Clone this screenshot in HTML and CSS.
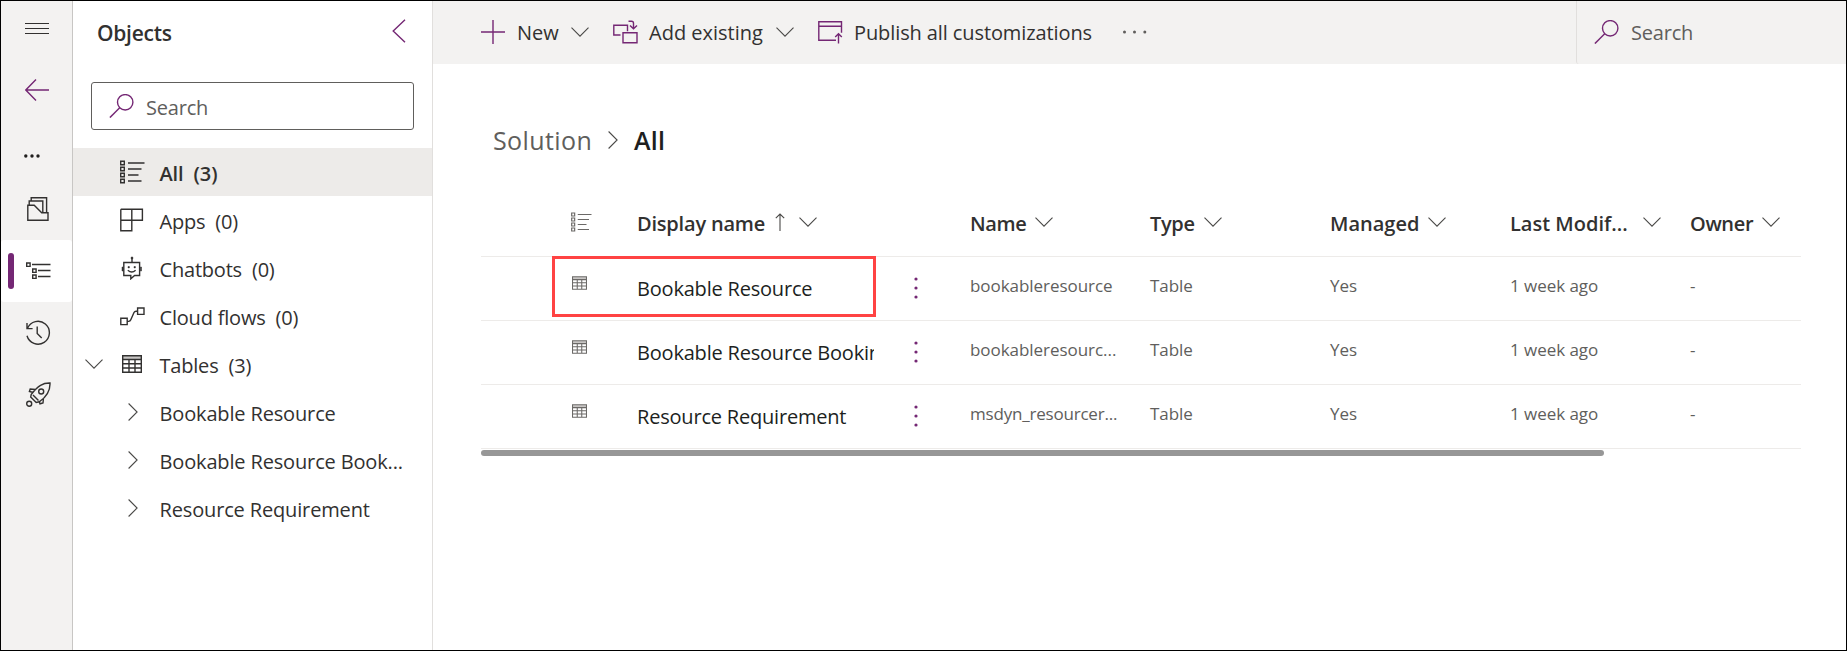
FILE: index.html
```html
<!DOCTYPE html>
<html lang="en">
<head>
<meta charset="utf-8">
<title>Solution - All</title>
<link rel="stylesheet" href="styles.css">
</head>
<body>
<svg class="defs" width="0" height="0">
  <symbol id="down" viewBox="0 0 18 10"><path d="M.5 .6 9 9.1 17.500 .6"/></symbol>
  <symbol id="right" viewBox="0 0 10 18"><path d="M.6 .5 9.100 9 .6 17.500"/></symbol>
  <symbol id="search" viewBox="0 0 24 24"><circle cx="15.700" cy="8.300" r="7.700"/><path d="M10.200 13.800.4 23.600"/></symbol>
  <symbol id="list" viewBox="0 0 25 24"><path d="M.7 1.200h3.600v3.600H.7zM.7 7.200h3.600v3.600H.7zM.7 13.200h3.600v3.600H.7zM.7 19.200h3.600v3.600H.7zM8 3h16.500M8 9h13.500M8 15h10.500M8 21h13.500"/></symbol>
  <symbol id="table" viewBox="0 0 20 18"><path class="head" d="M1 1h18v3.500H1z"/><path d="M.7.700h18.600v16.600H.7zM.7 4.500h18.600M.7 8.700h18.600M.7 13h18.600M7 4.500v12.800M13 4.500v12.800"/></symbol>
</svg>
<div class="app">
  <nav class="rail">
    <svg class="ic menu" viewBox="0 0 24 12"><path d="M0 1.500h24M0 6.500h24M0 11.500h24"/></svg>
    <svg class="ic back" viewBox="0 0 24 22"><path d="M11 .5.800 11 11 21.500M.8 11H24"/></svg>
    <svg class="more" viewBox="0 0 16 4"><circle cx="1.800" cy="2" r="1.700"/><circle cx="8" cy="2" r="1.700"/><circle cx="14" cy="2" r="1.700"/></svg>
    <div class="slot"><svg class="ic" width="22" height="24" viewBox="0 0 22 24"><path d="M.8 8.200h6.400l7.500 7.500h6.300v7.500H.8zM2.200 8V4h13.600v11.500M4.200 3.800V.8h15.400v14.700"/></svg></div>
    <div class="slot on"><svg class="ic" width="25" height="18" viewBox="0 0 25 18"><path d="M.7 1h3.400v3.400H.7zM6.700 7h3.400v3.400H6.700zM6.700 13h3.400v3.400H6.700zM6 2.500h18.500M12 8.500h12.500M12 14.500h12.500"/></svg></div>
    <div class="slot"><svg class="ic" width="25" height="25" viewBox="0 0 25 25"><path d="M1.500 8.200A11.400 11.400 0 1 1 1 15.800M1 3v5.600h5.600M11.200 6.500v7l4.500 4.500"/></svg></div>
    <div class="slot"><svg class="ic" width="25" height="25" viewBox="0 0 25 25"><path d="M24 1C17 .8 12 3.500 5.200 12.500L4.700 15l5.500 5.500 3-.7C21 14.500 24.300 8 24 1zM9.500 7.500 4.200 7l-.8 2.500 4 1M17.500 16l-.5 5-3 .8-.7-2M7 13l5.500 5.600"/><circle cx="15.200" cy="9.500" r="2.500"/><circle cx="3.200" cy="21.700" r="2.500"/></svg></div>
  </nav>

  <aside class="panel">
    <header class="panel-head"><h2>Objects</h2><svg class="ic purple" width="14" height="24" viewBox="0 0 14 24"><path d="M13 .7 1.200 12 13 23.300"/></svg></header>
    <div class="box"><svg class="ic purple" width="25" height="24"><use href="#search"/></svg><span>Search</span></div>
    <ul class="tree">
      <li class="sel"><svg class="ic" width="25" height="24"><use href="#list"/></svg><span>All<b>(3)</b></span></li>
      <li><svg class="ic" width="24" height="24" viewBox="0 0 24 24"><path d="M.8 1.200h21.600v11H.8M.8 1.200v21.600h11V1.200"/></svg><span>Apps<b>(0)</b></span></li>
      <li><svg class="ic bot" width="24" height="24" viewBox="0 0 24 24"><path d="M3.800 6.500h15.800v13h-5l-3.800 3.300v-3.300h-7zM12 1.500v5M7.800 14.200q4 3.600 7.800 0"/><path class="dot" d="M11.200 1h1.600v2h-1.600zM2 11h1.200v4H2zM20.300 11h1.200v4h-1.200zM8 10.500h1.400v1.400H8zM14 10.500h1.400v1.400H14z"/></svg><span>Chatbots<b>(0)</b></span></li>
      <li><svg class="ic" width="25" height="24" viewBox="0 0 25 24"><path d="M.8 14.200h6.400v6.400H.8zM17.600 4h6.400v6.400h-6.400zM7.200 17.400h1.500q1.500 0 2.100-1.600L14 8.500q.6-1.300 2-1.300h1.600"/></svg><span>Cloud flows<b>(0)</b></span></li>
      <li class="open"><svg class="ic thin" width="18" height="10"><use href="#down"/></svg><svg class="ic grid" width="20" height="18"><use href="#table"/></svg><span>Tables<b>(3)</b></span></li>
      <li class="child"><svg class="ic thin" width="10" height="18"><use href="#right"/></svg><span>Bookable Resource</span></li>
      <li class="child"><svg class="ic thin" width="10" height="18"><use href="#right"/></svg><span>Bookable Resource Book...</span></li>
      <li class="child"><svg class="ic thin" width="10" height="18"><use href="#right"/></svg><span>Resource Requirement</span></li>
    </ul>
  </aside>

  <main class="main">
    <div class="bar">
      <svg class="ic purple" width="24" height="24" viewBox="0 0 24 24"><path d="M12 0v24M0 12h24"/></svg><span class="l-new">New</span>
      <svg class="ic thin c1" width="18" height="10"><use href="#down"/></svg>
      <svg class="ic purple c2" width="25" height="24" viewBox="0 0 25 24"><path d="M7.500 15H.8V5.200h13.700v6M10 12.700h14v10H10zM15.500 1.200h3q2 0 2 2v5.200M17 5.500l3.500 3.300L24 5.500"/></svg><span class="l-add">Add existing</span>
      <svg class="ic thin c3" width="18" height="10"><use href="#down"/></svg>
      <svg class="ic purple c4" width="25" height="24" viewBox="0 0 25 24"><path d="M18 20.300H.8V1.800h22.700v11M.8 6.300h22.700M20.500 23.500v-9.500M17.200 17l3.300-3.200 3.300 3.200"/></svg><span class="l-pub">Publish all customizations</span>
      <svg class="dots" width="24" height="4" viewBox="0 0 24 4"><circle cx="1.500" cy="2" r="1.500"/><circle cx="11.500" cy="2" r="1.500"/><circle cx="21.800" cy="2" r="1.500"/></svg>
      <div class="find"><svg class="ic purple" width="25" height="24"><use href="#search"/></svg><span>Search</span></div>
    </div>
    <div class="crumbs"><span class="sol">Solution</span><svg class="ic thin" width="10" height="18"><use href="#right"/></svg><strong>All</strong></div>

    <section class="list">
      <div class="row head-row">
        <svg class="ic gray" width="21" height="20"><use href="#list"/></svg>
        <div class="cell disp"><span>Display name</span><svg class="ic thin up" width="10" height="18" viewBox="0 0 10 18"><path d="M5 18V1M.8 5.200 5 1l4.200 4.200"/></svg><svg class="ic thin" width="18" height="10"><use href="#down"/></svg></div>
        <i></i>
        <div class="cell"><span>Name</span><svg class="ic thin" width="18" height="10"><use href="#down"/></svg></div>
        <div class="cell"><span>Type</span><svg class="ic thin" width="18" height="10"><use href="#down"/></svg></div>
        <div class="cell managed"><span>Managed</span><svg class="ic thin" width="18" height="10"><use href="#down"/></svg></div>
        <div class="cell wide"><span>Last Modif...</span><svg class="ic thin" width="18" height="10"><use href="#down"/></svg></div>
        <div class="cell"><span>Owner</span><svg class="ic thin" width="18" height="10"><use href="#down"/></svg></div>
      </div>
      <div class="row marked">
        <svg class="ic gray tb" width="15" height="14"><use href="#table"/></svg><a>Bookable Resource</a>
        <svg class="kebab" width="4" height="22"><circle cx="2" cy="2" r="1.600"/><circle cx="2" cy="11" r="1.600"/><circle cx="2" cy="20" r="1.600"/></svg>
        <span>bookableresource</span><span>Table</span><span>Yes</span><span>1 week ago</span><span>-</span>
      </div>
      <div class="row">
        <svg class="ic gray tb" width="15" height="14"><use href="#table"/></svg><a>Bookable Resource Bookin</a>
        <svg class="kebab" width="4" height="22"><circle cx="2" cy="2" r="1.600"/><circle cx="2" cy="11" r="1.600"/><circle cx="2" cy="20" r="1.600"/></svg>
        <span>bookableresourc...</span><span>Table</span><span>Yes</span><span>1 week ago</span><span>-</span>
      </div>
      <div class="row">
        <svg class="ic gray tb" width="15" height="14"><use href="#table"/></svg><a>Resource Requirement</a>
        <svg class="kebab" width="4" height="22"><circle cx="2" cy="2" r="1.600"/><circle cx="2" cy="11" r="1.600"/><circle cx="2" cy="20" r="1.600"/></svg>
        <span class="tight">msdyn_resourcer...</span><span>Table</span><span>Yes</span><span>1 week ago</span><span>-</span>
      </div>
      <div class="scroll"></div>
    </section>
  </main>
</div>
</body>
</html>
```
FILE: styles.css
```css
*, *::before, *::after { box-sizing: border-box; }
body { margin: 0; font-family: "Open Sans", "Noto Sans", sans-serif; font-size: 20px; letter-spacing: -0.2px; color: #323130; line-height: 28px; }
svg { display: block; flex: none; }
.defs { position: absolute; }
.app { display: flex; width: 1847px; height: 651px; border: 1px solid #000; background: #fff; overflow: hidden; }
.ic { fill: none; stroke: #323130; stroke-width: 1.4; }
.purple { stroke: #742774; }
.thin { stroke-width: 1.1; stroke: #4a4947; }
.gray { stroke: #6b6967; }
.head { fill: #c8c6c4; stroke: none; }
.dot { fill: #323130; stroke-width: .5; }

.rail { width: 72px; flex: none; background: #f3f2f1; border-right: 1px solid #c8c6c4; }
.menu { width: 24px; height: 12px; margin: 21px 0 0 24px; stroke-width: 1; }
.back { width: 24px; height: 22px; margin: 45px 0 0 24px; stroke: #742774; }
.more { width: 16px; height: 4px; margin: 53px 0 20px 23px; fill: #201f1e; }
.slot { height: 62px; display: flex; align-items: center; padding-left: 26px; }
.slot:nth-of-type(n+2) { padding-left: 25px; }
.slot:nth-of-type(n+3) svg { margin-bottom: 1px; }
.rail .slot.on { background: #fff; border-radius: 3px; padding-left: 7px; gap: 12px; }
.slot.on::before { content: ""; width: 6px; height: 36px; border-radius: 3px; background: #742774; }

.panel { width: 360px; flex: none; border-right: 1px solid #e1dfdd; }
.panel-head { display: flex; justify-content: space-between; padding: 18px 26px 0 24px; height: 81px; }
.panel-head h2 { margin: 0; font-size: 21px; font-weight: 600; letter-spacing: -0.25px; }
.box { width: 323px; height: 48px; margin-left: 18px; border: 1px solid #605e5c; border-radius: 3px; display: flex; align-items: center; gap: 12px; padding-left: 17px; color: #605e5c; }
.box svg { margin-bottom: 1px; }
.box span { margin-top: 3px; }
.tree { list-style: none; margin: 18px 0 0; padding: 0; }
.tree li { height: 48px; display: flex; align-items: center; padding-left: 47px; }
.tree li > svg { margin-bottom: 1px; }
.tree li > span { margin: 3px 0 0 auto; width: 272.5px; white-space: nowrap; }
.tree b { font-weight: 400; margin-left: 10px; }
.tree .sel { background: #edebe9; }
.tree .sel span, .tree .sel b { font-weight: 600; letter-spacing: -0.1px; }
.tree .open { padding-left: 12px; }
.open .grid { margin-left: 19px; }
.tree .child { padding-left: 55px; }
.child span { letter-spacing: -0.15px; }

.main { flex: 1; min-width: 0; }
.bar { height: 63px; background: #f3f2f1; display: flex; align-items: center; padding-left: 48px; white-space: nowrap; }
.bar > svg { margin-bottom: 1px; }
.l-new { width: 42px; margin-left: 12px; letter-spacing: 0; }
.c1 { margin-left: 12px; }
.c2 { margin-left: 24px; }
.l-add { width: 114px; margin-left: 11px; letter-spacing: 0; }
.c3 { margin-left: 13px; }
.c4 { margin-left: 24px; }
.l-pub { width: 238px; margin-left: 11px; letter-spacing: -0.1px; }
.bar .dots { margin: 0 0 2px 31px; fill: #605e5c; }
.find { margin-left: auto; width: 270px; height: 63px; border-left: 1px solid #e1dfdd; border-bottom-left-radius: 3px; display: flex; align-items: center; gap: 12px; padding-left: 17px; color: #605e5c; }
.find svg { margin-bottom: 1px; }
.crumbs { display: flex; align-items: center; margin: 58px 0 0 60px; height: 36px; font-size: 25px; }
.crumbs .sol { width: 98px; color: #605e5c; letter-spacing: 0.4px; }
.crumbs svg { margin: 0 16px 0 17px; }
.crumbs strong { font-weight: 600; color: #201f1e; letter-spacing: 0.3px; }

.list { width: 1320px; margin: 34px 0 0 48px; }
.row { position: relative; height: 64px; border-bottom: 1px solid #edebe9; display: grid; grid-template-columns: 66px 240px 93px 180px 180px 180px 180px 111px; padding-left: 90px; }
.head-row { height: 65px; font-weight: 600; letter-spacing: -0.35px; align-items: center; }
.head-row > svg { margin-bottom: 4px; }
.cell { display: flex; align-items: center; gap: 9px; white-space: nowrap; }
.cell svg { margin-bottom: 4px; }
.cell.disp { gap: 10px; letter-spacing: -0.2px; }
.cell.disp svg:last-child { margin-left: 4px; }
.cell.managed { letter-spacing: 0; }
.cell.wide { gap: 15px; letter-spacing: 0; }
.row a { width: 237px; overflow: hidden; white-space: nowrap; margin-top: 18px; color: #201f1e; }
.row > span { font-size: 17px; letter-spacing: -0.05px; color: #605e5c; margin-top: 15px; }
.row > .tight { letter-spacing: -0.2px; }
.tb { margin: 19px 0 0 1px; }
.kebab { margin: 20px 0 0 37px; fill: #742774; }
.marked::after { content: ""; position: absolute; left: 71px; top: -1px; width: 324px; height: 61px; border: 3px solid #ff4343; }
.scroll { width: 1123px; height: 6px; margin-top: 1px; border-radius: 3px; background: #979797; }
```
